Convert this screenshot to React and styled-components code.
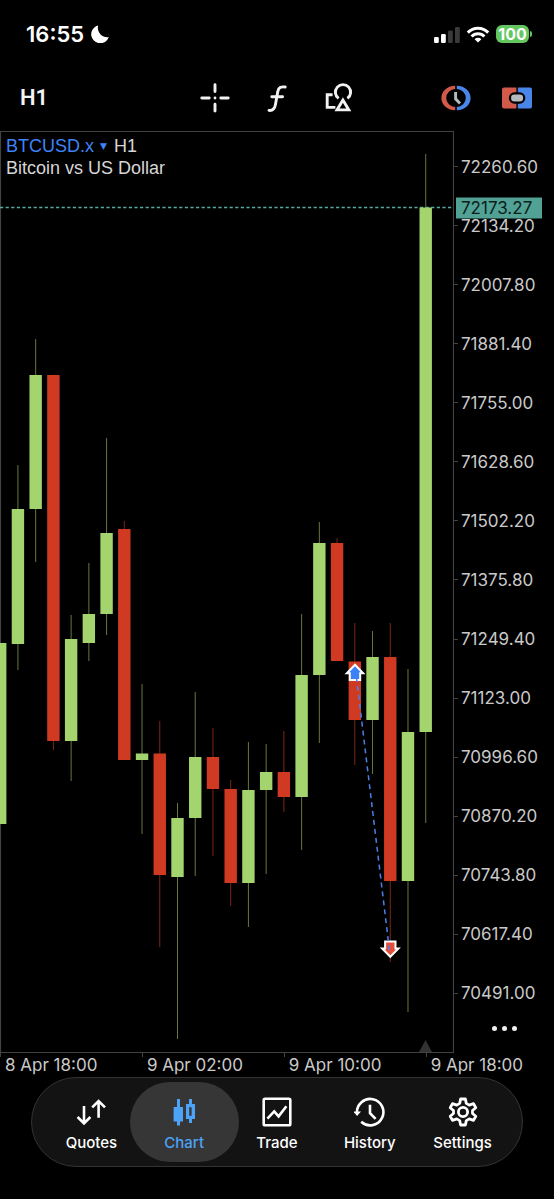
import styled, { createGlobalStyle, css } from 'styled-components';

const GlobalStyle = createGlobalStyle`
  * {
    box-sizing: border-box;
  }

  body {
    margin: 0;
    background: #000;
    color: #f4f4f4;
    font-family: Inter, 'Liberation Sans', sans-serif;
  }

  button {
    margin: 0;
    padding: 0;
    border: 0;
    background: none;
    color: inherit;
    font: inherit;
    cursor: pointer;
  }
`;

const GREEN = '#a3d46e';
const RED = '#d03a22';

const PLOT_WIDTH = 454;
const PLOT_HEIGHT = 923;
const CANDLE_STEP = 17.73;
const BID_Y = 77.5;

// high, body top, body bottom, low (plot units), rising
const candles = [
  [513, 513, 694, 694, true],
  [335, 379, 514, 540, true],
  [209, 245, 379, 432, true],
  [245, 245, 611, 620, false],
  [485, 509, 611, 651, true],
  [433, 484, 513, 531, true],
  [308, 403, 484, 505, true],
  [391, 399, 630, 630, false],
  [554, 623.5, 630, 704, true],
  [591, 623.5, 745, 817, false],
  [673, 688, 747, 909, true],
  [562, 627, 688, 746, true],
  [598, 627, 659, 726, false],
  [650, 659, 753, 776, false],
  [612, 660, 753, 797, true],
  [614, 642, 660, 744, true],
  [601, 642, 667, 682, false],
  [484, 545, 667, 720, true],
  [392, 413, 545, 613, true],
  [408, 413, 531, 531, false],
  [493, 531.5, 590, 635, false],
  [501, 527, 590, 644, true],
  [493, 527, 751, 832, false],
  [539, 602, 751, 882, true],
  [24, 77.5, 602, 693, true],
];

const prices = [
  '72260.60',
  '72134.20',
  '72007.80',
  '71881.40',
  '71755.00',
  '71628.60',
  '71502.20',
  '71375.80',
  '71249.40',
  '71123.00',
  '70996.60',
  '70870.20',
  '70743.80',
  '70617.40',
  '70491.00',
];

const times = ['8 Apr 18:00', '9 Apr 02:00', '9 Apr 10:00', '9 Apr 18:00'];

const MoonIcon = () => (
  <svg width="18" height="18" viewBox="0 0 18 18" aria-hidden="true">
    <path d="M7.2.5A9 9 0 1 0 17.8 12 9.2 9.2 0 0 1 7.2.5z" fill="#fff" />
  </svg>
);

const SignalIcon = () => (
  <svg width="26" height="17" viewBox="0 0 26 17" aria-hidden="true">
    <rect x="0" y="11" width="4.8" height="6" rx="1.3" fill="#fff" />
    <rect x="7" y="8" width="4.8" height="9" rx="1.3" fill="#fff" />
    <rect x="14" y="4.5" width="4.8" height="12.5" rx="1.3" fill="#3a3a3a" />
    <rect x="21" y="1" width="4.8" height="16" rx="1.3" fill="#3a3a3a" />
  </svg>
);

const WifiIcon = () => (
  <svg width="24" height="17" viewBox="0 0 24 17" fill="none" stroke="#fff" strokeWidth="3" aria-hidden="true">
    <path d="M1.8 6.6a14.4 14.4 0 0 1 20.4 0" />
    <path d="M5.6 10.5a9 9 0 0 1 12.8 0" />
    <path d="M12 16.6l-3.4-3.4a4.8 4.8 0 0 1 6.8 0z" fill="#fff" stroke="none" />
  </svg>
);

const CrosshairIcon = () => (
  <svg width="32" height="32" viewBox="0 0 32 32" stroke="#f2f2f2" strokeWidth="2.9" strokeLinecap="round" aria-hidden="true">
    <path d="M16 2.8v6.8M16 22.2V29M2.8 16h7.4M21.8 16h7.4" />
    <circle cx="16" cy="16" r="1.4" fill="#f2f2f2" stroke="none" />
  </svg>
);

const FunctionIcon = () => (
  <svg width="32" height="32" viewBox="0 0 32 32" fill="none" stroke="#f2f2f2" strokeWidth="2.9" strokeLinecap="round" aria-hidden="true">
    <path d="M24.2 5c-4.4-.7-6.8.7-7.4 4.6l-2.4 13.2c-.7 4-2.4 6-6.4 5.6" />
    <path d="M10.8 14.8h10.8" />
  </svg>
);

const ObjectsIcon = () => (
  <svg width="32" height="32" viewBox="0 0 32 32" fill="none" stroke="#f2f2f2" strokeWidth="2.9" aria-hidden="true">
    <path d="M15.6 16.4a7.6 7.6 0 1 1 8.8 0" />
    <path d="M9.6 12.8H4.2v12.6h8.2" />
    <path d="M19.9 18l5.9 9.9H14z" />
  </svg>
);

const SessionIcon = () => (
  <svg width="32" height="32" viewBox="0 0 32 32" aria-hidden="true">
    <path d="M15.2 3.8C7 4 1.4 9.3 1.4 16S7 28 15.2 28.2V25a9 9 0 0 1 0-18z" fill="#d15a4b" />
    <path d="M16.8 3.8C25 4 30.6 9.3 30.6 16S25 28 16.8 28.2V25a9 9 0 0 0 0-18z" fill="#4a86ea" />
    <path d="M15.6 10v6.8l4.4 4.6" fill="none" stroke="#b4babd" strokeWidth="2.9" />
  </svg>
);

const PanelIcon = () => (
  <svg width="32" height="32" viewBox="0 0 32 32" aria-hidden="true">
    <path d="M3 5.4h12.4v21.2H3a2 2 0 0 1-2-2V7.4a2 2 0 0 1 2-2z" fill="#d15a4b" />
    <path d="M16.8 5.4H29a2 2 0 0 1 2 2v17.2a2 2 0 0 1-2 2H16.8z" fill="#4a86ea" />
    <rect x="9" y="11.4" width="14.2" height="9.2" rx="4.4" fill="#b4babd" stroke="#000" strokeWidth="2.2" />
  </svg>
);

const QuotesIcon = () => (
  <svg width="32" height="32" viewBox="0 0 32 32" fill="none" stroke="#fff" strokeWidth="2.6" aria-hidden="true">
    <path d="M9 10v16.6M2.6 21L9 27.4l6.4-6.4M23.6 21.8V4.6M17.2 11.4L23.6 5l6.4 6.4" />
  </svg>
);

const ChartIcon = () => (
  <svg width="32" height="32" viewBox="0 0 32 32" fill="#4da3f7" aria-hidden="true">
    <path d="M9 3h3v8h3v14.4h-3v4H9v-4H5.6V11H9z" />
    <path d="M21 3h3v5h3v15h-3v4h-3v-4h-3V8h3zm.2 8.2v8.6h2.4v-8.6z" fillRule="evenodd" />
  </svg>
);

const TradeIcon = () => (
  <svg width="32" height="32" viewBox="0 0 32 32" fill="none" stroke="#fff" strokeWidth="2.6" aria-hidden="true">
    <rect x="2.7" y="2.7" width="26.6" height="26.6" rx="1.4" />
    <path d="M6.4 22.6l6.8-7.2 4.4 5 7.8-10.2" />
  </svg>
);

const HistoryIcon = () => (
  <svg width="32" height="32" viewBox="0 0 32 32" fill="none" stroke="#fff" strokeWidth="2.6" aria-hidden="true">
    <path d="M3 17A13.2 13.2 0 1 1 7.2 25.8" />
    <path d="M-.8 15.4h7.8L3.1 20z" fill="#fff" stroke="none" />
    <path d="M16 8.8v8.4l5.6 5.6" />
  </svg>
);

const SettingsIcon = () => (
  <svg width="32" height="32" viewBox="0 0 32 32" fill="none" stroke="#fff" strokeWidth="2.8" strokeLinejoin="round" aria-hidden="true">
    <path d="M13.6 3h4.8l.9 4.4 2.9 1.7 4.3-1.5 2.3 4.1-3.3 2.8v3l3.3 2.8-2.3 4.1-4.3-1.5-2.9 1.7-.9 4.4h-4.8l-.9-4.4-2.9-1.7-4.3 1.5-2.3-4.1 3.3-2.8v-3l-3.3-2.8 2.3-4.1 4.3 1.5 2.9-1.7z" />
    <circle cx="16" cy="16" r="4.6" />
  </svg>
);

const tabs = [
  { label: 'Quotes', icon: <QuotesIcon /> },
  { label: 'Chart', icon: <ChartIcon />, active: true },
  { label: 'Trade', icon: <TradeIcon /> },
  { label: 'History', icon: <HistoryIcon /> },
  { label: 'Settings', icon: <SettingsIcon /> },
];

const Plot = () => (
  <PlotSvg viewBox={`0 0 ${PLOT_WIDTH} ${PLOT_HEIGHT}`} role="img" aria-label="BTCUSD.x H1 candles">
    <path d="M.5 923V1.5h453v921H.5" fill="none" stroke="#424242" strokeWidth="1.2" />
    <path d="M419 922l6.5-12 6.5 12z" fill="#333" />
    <path
      d={`M0 ${BID_Y}H453`}
      stroke="#55aa9e"
      strokeWidth="1.4"
      strokeDasharray="3.2 2.4"
    />
    {candles.map(([high, top, bottom, low, rising], index) => {
      const x = index * CANDLE_STEP + 0.2;
      return (
        <g key={index}>
          <path d={`M${x} ${high}V${low}`} stroke={rising ? '#66783f' : '#7d2517'} />
          <rect x={x - 6.2} y={top} width="12.4" height={bottom - top} fill={rising ? GREEN : RED} />
        </g>
      );
    })}
    <path d="M355 534.8l8.2 8.4h-3v6.8h-10.4v-6.8h-3z" fill="#3c82f6" stroke="#fff" strokeWidth="2" />
    <path d="M390.3 826.8l8.2-8.4h-3v-6.8h-10.4v6.8h-3z" fill="#e2503c" stroke="#fff" strokeWidth="2" />
    <path d="M356.4 547L389.8 823" stroke="#4a80e8" strokeWidth="1.5" strokeDasharray="5 4" />
  </PlotSvg>
);

const App = () => {
  return (
    <Page>
      <GlobalStyle />
      <StatusBar>
        <Clock>
          16:55
          <MoonIcon />
        </Clock>
        <StatusIcons>
          <SignalIcon />
          <WifiIcon />
          <Battery>100</Battery>
        </StatusIcons>
      </StatusBar>
      <Toolbar>
        <Timeframe>H1</Timeframe>
        <ToolGroup $gap="30px">
          <ToolButton aria-label="Crosshair">
            <CrosshairIcon />
          </ToolButton>
          <ToolButton aria-label="Indicators">
            <FunctionIcon />
          </ToolButton>
          <ToolButton aria-label="Objects">
            <ObjectsIcon />
          </ToolButton>
        </ToolGroup>
        <ToolGroup $gap="29px" $end>
          <ToolButton aria-label="Sessions">
            <SessionIcon />
          </ToolButton>
          <ToolButton aria-label="One click trading">
            <PanelIcon />
          </ToolButton>
        </ToolGroup>
      </Toolbar>
      <ChartArea>
        <PlotPane>
          <Plot />
          <Legend>
            <SymbolRow>
              <SymbolButton>
                BTCUSD.x <Caret>▼</Caret>
              </SymbolButton>
              <span>H1</span>
            </SymbolRow>
            <div>Bitcoin vs US Dollar</div>
          </Legend>
        </PlotPane>
        <PriceAxis>
          {prices.map((price) => (
            <Price key={price}>{price}</Price>
          ))}
          <MoreButton aria-label="More">
            <Dot />
            <Dot />
            <Dot />
          </MoreButton>
          <BidTag style={{ top: `${(BID_Y / PLOT_HEIGHT) * 100}%` }}>72173.27</BidTag>
        </PriceAxis>
      </ChartArea>
      <TimeAxis>
        {times.map((time) => (
          <Time key={time}>{time}</Time>
        ))}
      </TimeAxis>
      <TabBar>
        {tabs.map(({ label, icon, active }) => (
          <Tab key={label} $active={active}>
            {icon}
            {label}
          </Tab>
        ))}
      </TabBar>
    </Page>
  );
};

const Page = styled.main`
  display: flex;
  flex-direction: column;
  min-height: 100vh;
`;

const StatusBar = styled.header`
  display: flex;
  align-items: center;
  justify-content: space-between;
  height: 65px;
  padding: 3px 22px 0 26px;
`;

const Clock = styled.div`
  display: flex;
  align-items: center;
  gap: 7px;
  font-size: 22px;
  font-weight: 600;
  line-height: 28px;
  color: #fff;
`;

const StatusIcons = styled.div`
  display: flex;
  align-items: center;
  gap: 6px;
`;

const Battery = styled.span`
  position: relative;
  width: 33px;
  margin-right: 3px;
  border-radius: 6px;
  background: #62c75f;
  color: #fff;
  font-size: 16px;
  font-weight: 700;
  line-height: 18px;
  text-align: center;

  &::after {
    content: '';
    position: absolute;
    top: 6px;
    right: -3px;
    width: 2px;
    height: 6px;
    border-radius: 0 2px 2px 0;
    background: #62c75f;
  }
`;

const Toolbar = styled.div`
  display: grid;
  grid-template-columns: 1fr auto 1fr;
  align-items: center;
  height: 65px;
  padding: 0 21px 0 20px;
`;

const Timeframe = styled.button`
  justify-self: start;
  font-family: Roboto, sans-serif;
  font-size: 22px;
  font-weight: 600;
  line-height: 28px;
`;

const ToolGroup = styled.div`
  display: flex;
  justify-self: ${({ $end }) => ($end ? 'end' : 'center')};
  gap: ${({ $gap }) => $gap};
`;

const ToolButton = styled.button`
  display: flex;
  width: 32px;
  height: 32px;
`;

const ChartArea = styled.section`
  display: grid;
  grid-template-columns: 1fr 100px;
`;

const PlotPane = styled.div`
  position: relative;
`;

const PlotSvg = styled.svg`
  display: block;
  width: 100%;
  height: auto;
`;

const Legend = styled.div`
  position: absolute;
  top: 5px;
  left: 6px;
  color: #d6d6d6;
  font-family: 'Liberation Sans', sans-serif;
  font-size: 18px;
  line-height: 22px;
`;

const SymbolRow = styled.div`
  display: flex;
  gap: 7px;
`;

const SymbolButton = styled.button`
  display: flex;
  align-items: center;
  gap: 6px;
  color: #3f83f8;
`;

const Caret = styled.span`
  font-family: 'DejaVu Sans', sans-serif;
  font-size: 9px;
`;

const PriceAxis = styled.div`
  position: relative;
  display: grid;
  grid-template-rows: repeat(15, 1fr) 30px;
  padding-top: 7px;
  font-size: 17px;
  color: #c9c9c9;
`;

const Price = styled.div`
  display: flex;
  align-items: center;
  gap: 3px;
  line-height: 20px;

  &::before {
    content: '';
    width: 4px;
    height: 1px;
    background: #424242;
  }
`;

const BidTag = styled.div`
  position: absolute;
  left: 2px;
  min-width: 86px;
  padding: 0 5px;
  background: #51a195;
  color: #0c1e1b;
  line-height: 21px;
  transform: translateY(-50%);
`;

const MoreButton = styled.button`
  display: flex;
  align-items: center;
  justify-self: center;
  gap: 5px;
  height: 12px;
`;

const Dot = styled.span`
  width: 5px;
  height: 5px;
  border-radius: 50%;
  background: #f0f0f0;
`;

const TimeAxis = styled.div`
  display: grid;
  grid-template-columns: repeat(3, calc((100% - 100px) * 5 / 16)) 1fr;
  height: 24px;
`;

const Time = styled.div`
  position: relative;
  padding-left: 5px;
  color: #c9c9c9;
  font-size: 17px;
  line-height: 24px;
  white-space: nowrap;

  &::before {
    content: '';
    position: absolute;
    top: 0;
    left: 0;
    width: 1px;
    height: 4px;
    background: #424242;
  }
`;

const TabBar = styled.nav`
  display: flex;
  margin: 0 31px 32px;
  padding: 4px 13px;
  border: 1px solid #333;
  border-radius: 45px;
  background: #131313;
`;

const Tab = styled.button`
  display: flex;
  flex: 1;
  flex-direction: column;
  align-items: center;
  gap: 6px;
  height: 80px;
  margin: 0 -8px;
  padding-top: 14px;
  border-radius: 40px;
  color: #fff;
  font-size: 15px;
  font-weight: 500;
  line-height: 18px;

  ${({ $active }) =>
    $active &&
    css`
      background: #363636;
      color: #4da3f7;
    `}
`;

export default App;
